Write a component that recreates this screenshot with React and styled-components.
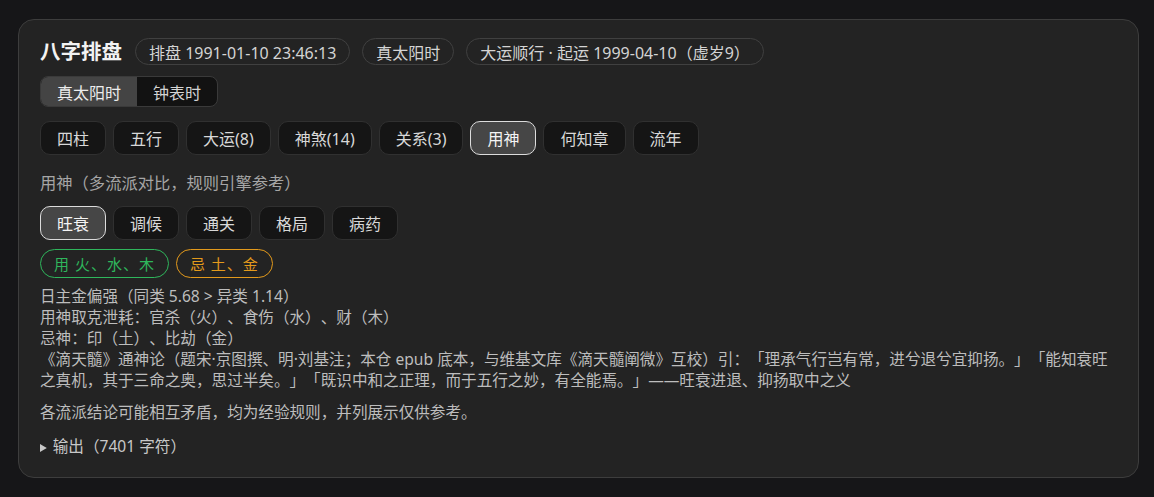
import React, { useState } from 'react';
import styled, { createGlobalStyle } from 'styled-components';

const GlobalStyle = createGlobalStyle`
  html, body {
    margin: 0;
    padding: 0;
    background: #161618;
  }
  body {
    font-family: "Noto Sans", "Noto Sans CJK SC", sans-serif;
    color: #d6d6d6;
    text-spacing-trim: space-all;
  }
  button, summary {
    text-spacing-trim: space-all;
  }
`;

const mainTabs = ['四柱', '五行', '大运(8)', '神煞(14)', '关系(3)', '用神', '何知章', '流年'];
const schoolTabs = ['旺衰', '调候', '通关', '格局', '病药'];

const lines = [
  '日主金偏强（同类 5.68 > 异类 1.14）',
  '用神取克泄耗：官杀（火）、食伤（水）、财（木）',
  '忌神：印（土）、比劫（金）',
  '《滴天髓》通神论（题宋·京图撰、明·刘基注；本仓 epub 底本，与维基文库《滴天髓阐微》互校）引：「理承气行岂有常，进兮退兮宜抑扬。」「能知衰旺之真机，其于三命之奥，思过半矣。」「既识中和之正理，而于五行之妙，有全能焉。」——旺衰进退、抑扬取中之义',
];

export default function App() {
  const [tab, setTab] = useState('用神');
  const [school, setSchool] = useState('旺衰');
  const [clock, setClock] = useState('真太阳时');

  return (
    <Page>
      <GlobalStyle />
      <Card>
        <Header>
          <Title>八字排盘</Title>
          <Chip>排盘 1991-01-10 23:46:13</Chip>
          <Chip>真太阳时</Chip>
          <Chip>大运顺行 · 起运 1999-04-10（虚岁9）</Chip>
        </Header>

        <Segmented>
          {['真太阳时', '钟表时'].map((s) => (
            <Segment key={s} $active={clock === s} onClick={() => setClock(s)}>
              {s}
            </Segment>
          ))}
        </Segmented>

        <TabRow $top={14}>
          {mainTabs.map((t) => (
            <Tab key={t} $active={tab === t} onClick={() => setTab(t)}>
              {t}
            </Tab>
          ))}
        </TabRow>

        <SectionLabel>用神（多流派对比，规则引擎参考）</SectionLabel>

        <TabRow $top={12}>
          {schoolTabs.map((t) => (
            <Tab key={t} $active={school === t} onClick={() => setSchool(t)}>
              {t}
            </Tab>
          ))}
        </TabRow>

        <TagRow>
          <Tag $color="#2fb65c">用 火、水、木</Tag>
          <Tag $color="#e39a1c">忌 土、金</Tag>
        </TagRow>

        <Body>
          {lines.map((l) => (
            <Line key={l}>{l}</Line>
          ))}
        </Body>

        <Note>各流派结论可能相互矛盾，均为经验规则，并列展示仅供参考。</Note>

        <Details>
          <Summary>输出（7401 字符）</Summary>
        </Details>
      </Card>
    </Page>
  );
}

const Page = styled.div`
  padding: 19px 15px 20px 18px;
`;

const Card = styled.section`
  background: #232323;
  border: 1px solid #3d3d3d;
  border-radius: 16px;
  padding: 18px 21px 18px 21px;
  display: flex;
  flex-direction: column;
  align-items: flex-start;
`;

const Header = styled.div`
  display: flex;
  align-items: center;
  gap: 12px;
`;

const Title = styled.h1`
  margin: 0 1px 0 0;
  font-size: 20.5px;
  font-weight: 700;
  color: #f2f2f2;
  line-height: 27px;
`;

const Chip = styled.span`
  height: 27px;
  box-sizing: border-box;
  display: inline-flex;
  align-items: center;
  padding: 0 13px;
  border: 1px solid #404040;
  border-radius: 999px;
  font-size: 16px;
  color: #d4d4d4;
`;

const Segmented = styled.div`
  margin-top: 11px;
  display: flex;
  border: 1px solid #3a3a3a;
  border-radius: 8px;
  overflow: hidden;
  background: #121212;
`;

const Segment = styled.button`
  height: 29px;
  padding: 0 16px;
  border: none;
  font-family: inherit;
  font-size: 16px;
  color: ${(p) => (p.$active ? '#ececec' : '#d4d4d4')};
  background: ${(p) => (p.$active ? '#444444' : 'transparent')};
  cursor: pointer;
`;

const TabRow = styled.div`
  margin-top: ${(p) => p.$top}px;
  display: flex;
  flex-wrap: wrap;
  gap: 7px;
`;

const Tab = styled.button`
  height: 34px;
  padding: 0 16px;
  border-radius: 10px;
  font-family: inherit;
  font-size: 16px;
  color: ${(p) => (p.$active ? '#f4f4f4' : '#d8d8d8')};
  background: ${(p) => (p.$active ? '#464646' : '#151515')};
  border: 1px solid ${(p) => (p.$active ? '#dcdcdc' : '#303030')};
  cursor: pointer;
`;

const SectionLabel = styled.div`
  margin-top: 17px;
  font-size: 16.3px;
  line-height: 22px;
  color: #a6a6a6;
`;

const TagRow = styled.div`
  margin-top: 9px;
  display: flex;
  gap: 7px;
`;

const Tag = styled.span`
  height: 29px;
  box-sizing: border-box;
  display: inline-flex;
  align-items: center;
  padding: 0 13px;
  border-radius: 999px;
  border: 1px solid ${(p) => p.$color};
  color: ${(p) => p.$color};
  font-size: 15px;
  letter-spacing: 1px;
`;

const Body = styled.div`
  margin-top: 8px;
  font-size: 15.6px;
  line-height: 21px;
  color: #bdbdbd;
`;

const Line = styled.div``;

const Note = styled.p`
  margin: 11px 0 0;
  font-size: 15.6px;
  line-height: 21px;
  color: #bdbdbd;
`;

const Details = styled.details`
  margin-top: 12px;
  font-size: 15.6px;
  color: #c8c8c8;
`;

const Summary = styled.summary`
  cursor: pointer;
  line-height: 22px;
  &::marker {
    font-size: 12px;
  }
`;
